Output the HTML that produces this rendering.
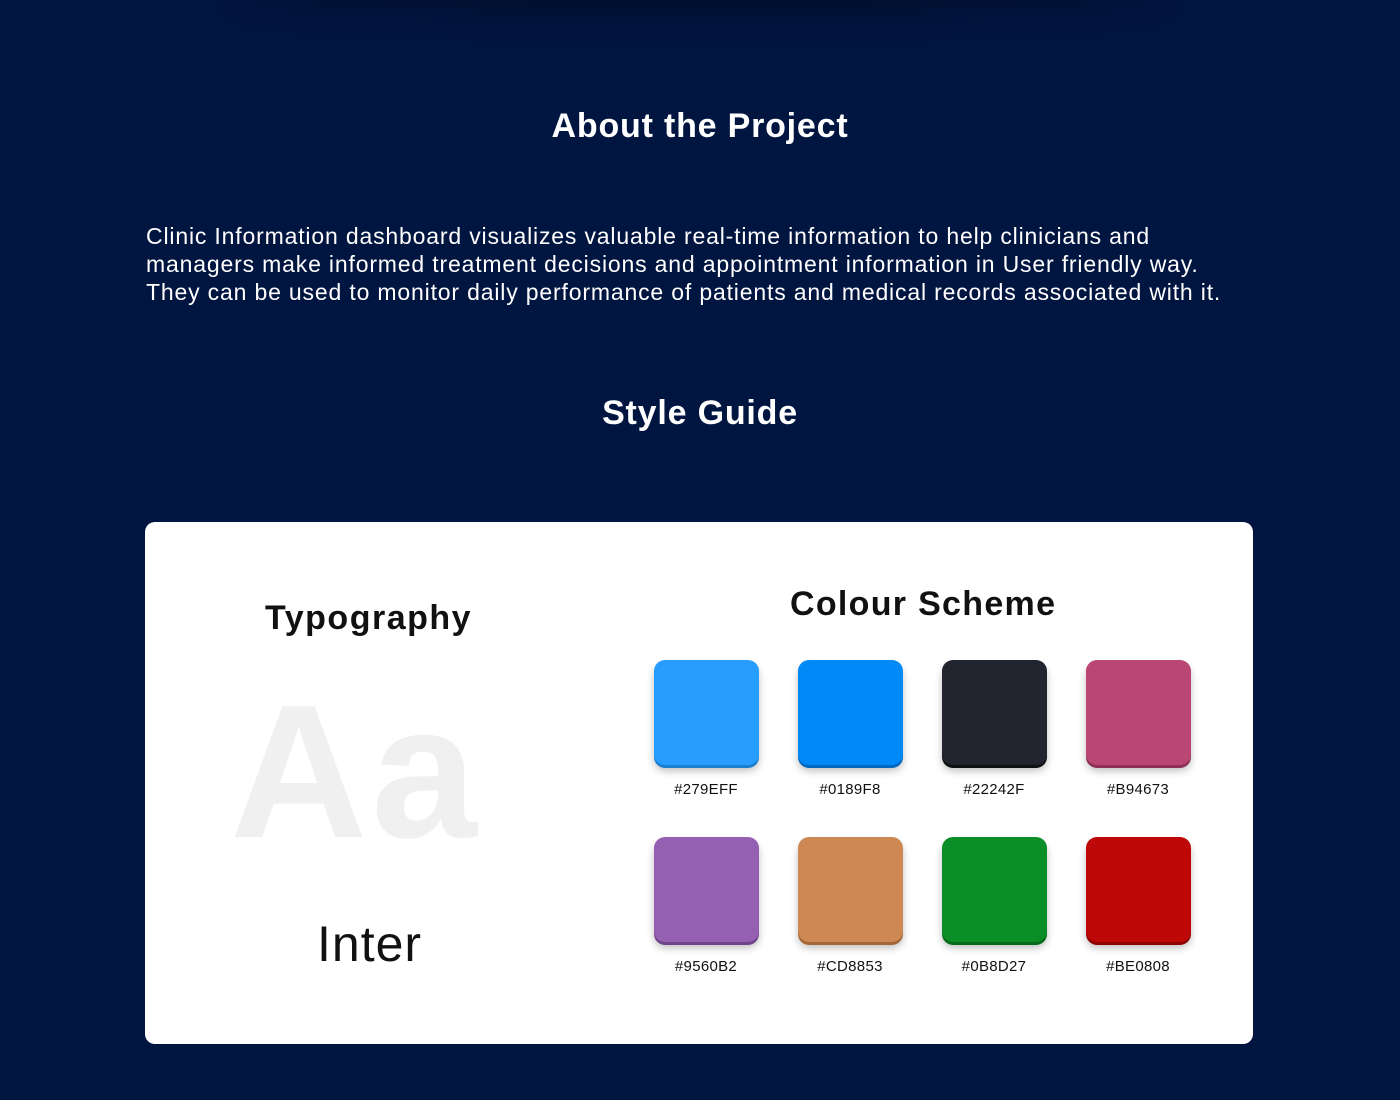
<!DOCTYPE html>
<html><head><style>
*{margin:0;padding:0;box-sizing:border-box}
body{width:1400px;height:1100px;background:#001540;font-family:"Liberation Sans",sans-serif;position:relative;overflow:hidden}
.topsh{position:absolute;left:250px;width:900px;top:-20px;height:20px;box-shadow:0 0 30px 10px rgba(0,0,0,.35);border-radius:50%}
h1{position:absolute;left:0;width:1400px;text-align:center;color:#fff;font-size:34px;font-weight:bold;letter-spacing:0.8px}
.p{position:absolute;left:146px;top:222px;color:#fff;font-size:23px;line-height:28px;white-space:nowrap;letter-spacing:0.83px}
.card{position:absolute;left:145px;top:522px;width:1108px;height:522px;background:#fff;border-radius:10px}
.t{position:absolute;color:#111;font-weight:bold;font-size:34px}
.sw{position:absolute;width:105px;height:105px;border-radius:11px}
.lb{position:absolute;width:144px;text-align:center;font-size:15px;color:#111;letter-spacing:0.3px}
</style></head><body>
<div class="topsh"></div>
<h1 style="top:107px">About the Project</h1>
<div class="p">Clinic Information dashboard visualizes valuable real-time information to help clinicians and<br>managers make informed treatment decisions and appointment information in User friendly way.<br>They can be used to monitor daily performance of patients and medical records associated with it.</div>
<h1 style="top:394px">Style Guide</h1>
<div class="card">
<div class="t" style="left:120px;top:77px;letter-spacing:1.5px">Typography</div>
<div class="t" style="left:645px;top:63px;letter-spacing:1.3px">Colour Scheme</div>
<div style="position:absolute;left:85px;top:155px;font-size:190px;font-weight:bold;color:#f0f0f0;letter-spacing:4px;line-height:1">Aa</div>
<div style="position:absolute;left:172px;top:393px;font-size:50px;color:#111;letter-spacing:1px">Inter</div>
</div>
<div id="sws"></div>
<script>
var c=[["#279EFF","#1a7fd0"],["#0189F8","#0068c0"],["#22242F","#111"],["#B94673","#8e3055"],["#9560B2","#70448a"],["#CD8853","#a56635"],["#0B8D27","#066a1a"],["#BE0808","#8e0404"]];
var h="";
c.forEach(function(v,i){var x=654+(i%4)*144,y=i<4?660:837;
h+='<div class="sw" style="left:'+x+'px;top:'+y+'px;background:'+v[0]+';box-shadow:0 3px 0 '+v[1]+',0 6px 8px rgba(0,0,0,.25)"></div><div class="lb" style="left:'+(x-20)+'px;top:'+(y+121)+'px">'+v[0]+'</div>';});
document.getElementById("sws").innerHTML=h;
</script>
</body></html>
